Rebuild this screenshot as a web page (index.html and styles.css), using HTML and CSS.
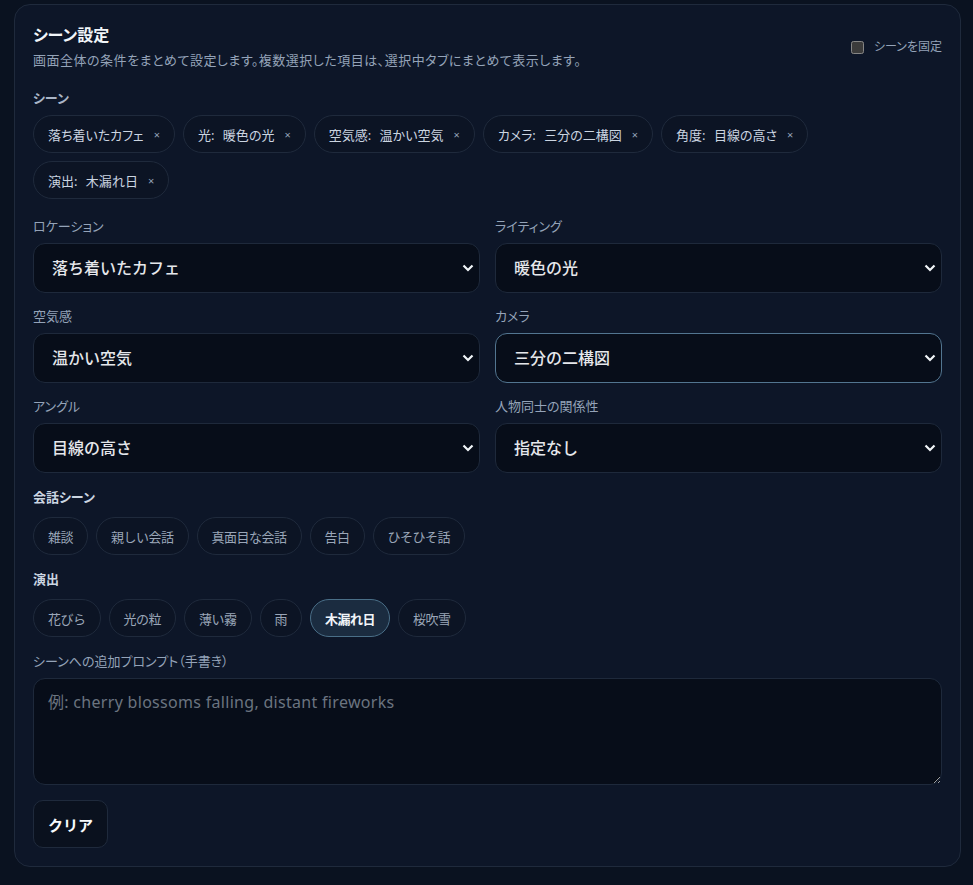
FILE: index.html
```html
<!DOCTYPE html>
<html lang="ja">
<head>
  <meta charset="UTF-8" />
  <meta name="viewport" content="width=device-width, initial-scale=1.0"/>
  <title>シーン設定</title>
  <link rel="stylesheet" href="styles.css">
</head>
<body>
  <section class="scene-panel">
    <div class="panel-head">
      <div>
        <h2 class="panel-title">シーン設定</h2>
        <p class="panel-desc">画面全体の条件をまとめて設定します。複数選択した項目は、選択中タブにまとめて表示します。</p>
      </div>
      <label class="lock-toggle"><input type="checkbox"> シーンを固定</label>
    </div>

    <div class="field scene-summary">
      <div class="field-label">シーン</div>
      <div class="chip-list">
        <span class="tag">落ち着いたカフェ <span class="tag-remove">×</span></span>
        <span class="tag">光: 暖色の光 <span class="tag-remove">×</span></span>
        <span class="tag">空気感: 温かい空気 <span class="tag-remove">×</span></span>
        <span class="tag">カメラ: 三分の二構図 <span class="tag-remove">×</span></span>
        <span class="tag">角度: 目線の高さ <span class="tag-remove">×</span></span>
        <span class="tag">演出: 木漏れ日 <span class="tag-remove">×</span></span>
      </div>
    </div>

    <div class="select-grid">
      <div class="field">
        <label class="field-label" for="location">ロケーション</label>
        <div class="select-wrap">
          <select id="location"><option>落ち着いたカフェ</option></select>
          <svg class="chevron" width="12" height="8" viewBox="0 0 12 8"><path d="M1.5 1.5 6 6l4.5-4.5"/></svg>
        </div>
      </div>
      <div class="field">
        <label class="field-label" for="lighting">ライティング</label>
        <div class="select-wrap">
          <select id="lighting"><option>暖色の光</option></select>
          <svg class="chevron" width="12" height="8" viewBox="0 0 12 8"><path d="M1.5 1.5 6 6l4.5-4.5"/></svg>
        </div>
      </div>
      <div class="field">
        <label class="field-label" for="mood">空気感</label>
        <div class="select-wrap">
          <select id="mood"><option>温かい空気</option></select>
          <svg class="chevron" width="12" height="8" viewBox="0 0 12 8"><path d="M1.5 1.5 6 6l4.5-4.5"/></svg>
        </div>
      </div>
      <div class="field">
        <label class="field-label" for="camera">カメラ</label>
        <div class="select-wrap">
          <select id="camera" class="is-focused"><option>三分の二構図</option></select>
          <svg class="chevron" width="12" height="8" viewBox="0 0 12 8"><path d="M1.5 1.5 6 6l4.5-4.5"/></svg>
        </div>
      </div>
      <div class="field">
        <label class="field-label" for="angle">アングル</label>
        <div class="select-wrap">
          <select id="angle"><option>目線の高さ</option></select>
          <svg class="chevron" width="12" height="8" viewBox="0 0 12 8"><path d="M1.5 1.5 6 6l4.5-4.5"/></svg>
        </div>
      </div>
      <div class="field">
        <label class="field-label" for="relation">人物同士の関係性</label>
        <div class="select-wrap">
          <select id="relation"><option>指定なし</option></select>
          <svg class="chevron" width="12" height="8" viewBox="0 0 12 8"><path d="M1.5 1.5 6 6l4.5-4.5"/></svg>
        </div>
      </div>
    </div>

    <div class="field">
      <div class="section-label">会話シーン</div>
      <div class="chip-list">
        <button class="option">雑談</button>
        <button class="option">親しい会話</button>
        <button class="option">真面目な会話</button>
        <button class="option">告白</button>
        <button class="option">ひそひそ話</button>
      </div>
    </div>

    <div class="field">
      <div class="section-label">演出</div>
      <div class="chip-list">
        <button class="option">花びら</button>
        <button class="option">光の粒</button>
        <button class="option">薄い霧</button>
        <button class="option">雨</button>
        <button class="option active">木漏れ日</button>
        <button class="option">桜吹雪</button>
      </div>
    </div>

    <div class="field">
      <label class="field-label" for="extra">シーンへの追加プロンプト（手書き）</label>
      <textarea id="extra" placeholder="例: cherry blossoms falling, distant fireworks"></textarea>
    </div>

    <div>
      <button class="btn-clear">クリア</button>
    </div>
  </section>
</body>
</html>
```

FILE: styles.css
```css
body {
  margin: 0;
  padding: 4px 12px 18px 14px;
  background: #0a1220;
  color: #e2e8f0;
  font-family: "Noto Sans", "Noto Sans CJK JP", sans-serif;
  font-feature-settings: "palt";
  color-scheme: dark;
}

.scene-panel {
  display: flex;
  flex-direction: column;
  gap: 15px;
  background: #0d1628;
  border: 1px solid #1f2a3c;
  border-radius: 16px;
  padding: 18px;
}

.panel-head {
  display: flex;
  justify-content: space-between;
  align-items: flex-start;
}

.panel-title {
  margin: 0;
  font-size: 16px;
  line-height: 24px;
  font-weight: 700;
  color: #f1f5f9;
}

.panel-desc {
  margin: 4px 0 0;
  font-size: 13px;
  line-height: 18px;
  letter-spacing: 0.5px;
  color: #94a3b8;
}

.lock-toggle {
  display: flex;
  align-items: center;
  gap: 6px;
  margin-top: 16px;
  font-size: 12px;
  line-height: 16px;
  color: #94a3b8;
}

.lock-toggle input {
  width: 13px;
  height: 13px;
  margin: 0 4px 0 0;
}

.field-label {
  display: block;
  font-size: 13px;
  line-height: 18px;
  color: #94a3b8;
  margin-bottom: 8px;
}

.scene-summary {
  margin-top: 5px;
}

.scene-summary .field-label {
  font-weight: 700;
  color: #a9b5c7;
}

.section-label {
  font-size: 13px;
  line-height: 18px;
  font-weight: 700;
  color: #cbd5e1;
  margin-bottom: 11px;
}

.chip-list {
  display: flex;
  flex-wrap: wrap;
  gap: 8px;
}

.tag,
.option {
  display: inline-flex;
  align-items: center;
  box-sizing: border-box;
  height: 38px;
  padding: 0 14px;
  border: 1px solid #1f2a3c;
  border-radius: 999px;
  background: #0c1424;
  font-family: inherit;
  font-size: 13px;
}

.tag {
  gap: 10px;
  word-spacing: 5px;
  color: #cbd5e1;
}

.tag-remove {
  font-size: 11px;
  color: #94a3b8;
}

.option {
  color: #9aa6b8;
  letter-spacing: -0.5px;
  cursor: pointer;
}

.option.active {
  background: #1b2c40;
  border-color: #4a6f88;
  color: #f1f5f9;
  font-weight: 700;
}

.select-grid {
  display: grid;
  grid-template-columns: 1fr 1fr;
  gap: 14px 15px;
  margin-top: 3px;
}

.select-wrap {
  position: relative;
}

.select-wrap select {
  appearance: none;
  width: 100%;
  height: 50px;
  box-sizing: border-box;
  padding: 0 40px 0 18px;
  border: 1px solid #1e293b;
  border-radius: 12px;
  background: #070d19;
  color: #e5e7eb;
  font-family: inherit;
  font-size: 16px;
  font-weight: 500;
  outline: none;
}

.select-wrap select.is-focused {
  border-color: #527590;
}

.chevron {
  position: absolute;
  right: 6px;
  top: 50%;
  margin-top: -4px;
  fill: none;
  stroke: #f1f5f9;
  stroke-width: 2.2;
  pointer-events: none;
}

textarea {
  display: block;
  width: 100%;
  height: 107px;
  box-sizing: border-box;
  padding: 12px 14px;
  border: 1px solid #1e293b;
  border-radius: 12px;
  background: #070d19;
  color: #e5e7eb;
  font-family: inherit;
  font-size: 16px;
  line-height: 22px;
  letter-spacing: 0.3px;
  outline: none;
}

textarea::placeholder {
  color: #6b7480;
}

.btn-clear {
  height: 48px;
  padding: 0 14px;
  border: 1px solid #1f2a3c;
  border-radius: 10px;
  background: #0a111e;
  color: #f8fafc;
  font-family: inherit;
  font-size: 15px;
  font-weight: 700;
  cursor: pointer;
}
```
